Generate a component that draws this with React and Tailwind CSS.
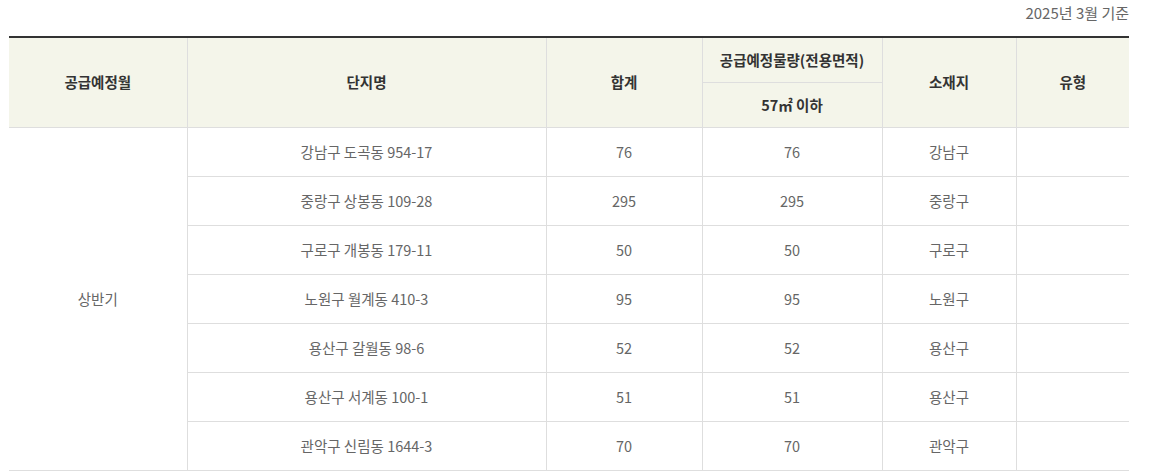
import React from "react";

const rows = [
  ["강남구 도곡동 954-17", "76", "76", "강남구"],
  ["중랑구 상봉동 109-28", "295", "295", "중랑구"],
  ["구로구 개봉동 179-11", "50", "50", "구로구"],
  ["노원구 월계동 410-3", "95", "95", "노원구"],
  ["용산구 갈월동 98-6", "52", "52", "용산구"],
  ["용산구 서계동 100-1", "51", "51", "용산구"],
  ["관악구 신림동 1644-3", "70", "70", "관악구"],
];

export default function App() {
  const font = { fontFamily: '"Noto Sans CJK KR", "Noto Sans", sans-serif' };
  return (
    <div className="bg-white w-[1150px] h-[474px] overflow-hidden" style={font}>
      <div className="w-[1120px] ml-[9px]">
        <div className="text-right text-[15px] leading-[20px] text-[#666] pt-[3px] h-[36px]">
          2025년 3월 기준
        </div>
        <table className="w-[1120px] table-fixed border-collapse border-t-2 border-[#333] text-[14.5px]">
          <colgroup>
            <col className="w-[178px]" />
            <col className="w-[359px]" />
            <col className="w-[156px]" />
            <col className="w-[180px]" />
            <col className="w-[134px]" />
            <col className="w-[113px]" />
          </colgroup>
          <thead className="bg-[#f4f5ea] text-[#333] font-bold">
            <tr className="h-[45px]">
              <th rowSpan={2} className="border-r border-b border-[#dedede] font-bold">공급예정월</th>
              <th rowSpan={2} className="border-r border-b border-[#dedede] font-bold">단지명</th>
              <th rowSpan={2} className="border-r border-b border-[#dedede] font-bold">합계</th>
              <th className="border-r border-b border-[#dedede] font-bold">공급예정물량(전용면적)</th>
              <th rowSpan={2} className="border-r border-b border-[#dedede] font-bold">소재지</th>
              <th rowSpan={2} className="border-b border-[#dedede] font-bold">유형</th>
            </tr>
            <tr className="h-[45px]">
              <th className="border-r border-b border-[#dedede] font-bold">57㎡ 이하</th>
            </tr>
          </thead>
          <tbody className="text-[#666] text-center">
            {rows.map((r, i) => (
              <tr key={i} className="h-[49px]">
                {i === 0 && (
                  <td rowSpan={7} className="border-r border-b border-[#dedede]">상반기</td>
                )}
                <td className="border-r border-b border-[#dedede]">{r[0]}</td>
                <td className="border-r border-b border-[#dedede]">{r[1]}</td>
                <td className="border-r border-b border-[#dedede]">{r[2]}</td>
                <td className="border-r border-b border-[#dedede]">{r[3]}</td>
                <td className="border-b border-[#dedede]"></td>
              </tr>
            ))}
          </tbody>
        </table>
      </div>
    </div>
  );
}
